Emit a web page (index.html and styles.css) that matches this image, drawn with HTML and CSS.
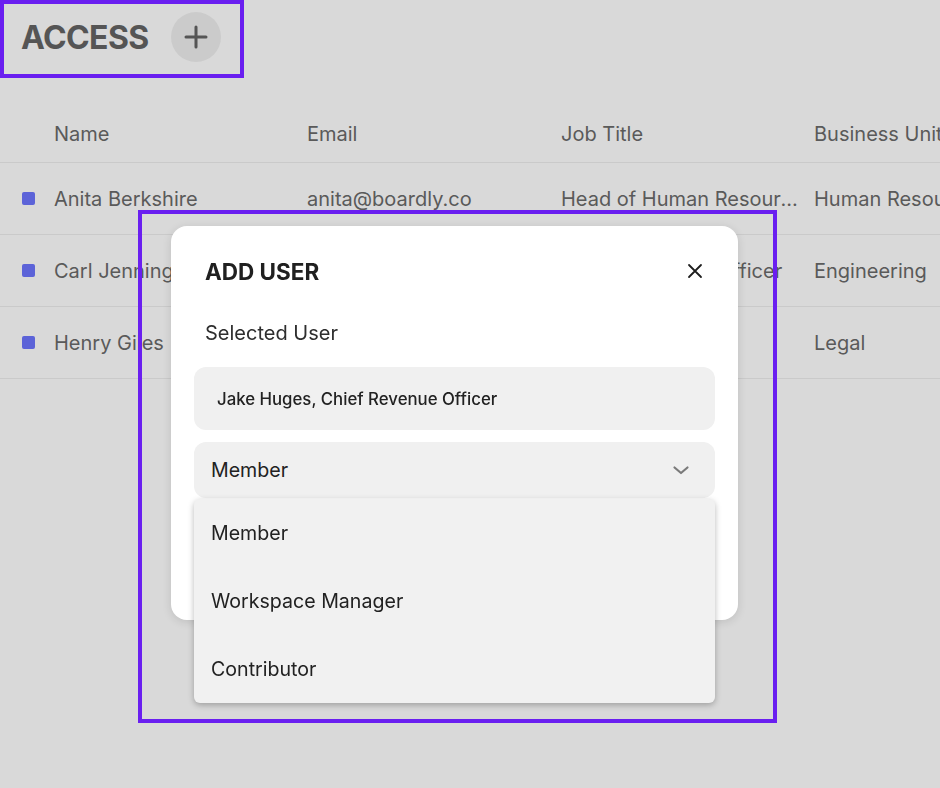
FILE: index.html
```html
<!DOCTYPE html>
<html lang="en">
<head>
<meta charset="utf-8">
<title>Access</title>
<link rel="stylesheet" href="styles.css">
</head>
<body>
<div class="page">
  <header class="page-header">
    <h1 class="page-title">ACCESS</h1>
    <button class="add-btn" aria-label="Add">
      <svg width="24" height="24" viewBox="0 0 24 24"><path d="M12 2v20M2 12h20" stroke="#555" stroke-width="3" stroke-linecap="round" fill="none"/></svg>
    </button>
  </header>

  <div class="table">
    <div class="row head">
      <div class="cell mark"></div>
      <div class="cell">Name</div>
      <div class="cell">Email</div>
      <div class="cell">Job Title</div>
      <div class="cell">Business Unit</div>
    </div>
    <div class="row">
      <div class="cell mark"><span class="sq"></span></div>
      <div class="cell">Anita Berkshire</div>
      <div class="cell">anita@boardly.co</div>
      <div class="cell">Head of Human Resources</div>
      <div class="cell">Human Resources</div>
    </div>
    <div class="row">
      <div class="cell mark"><span class="sq"></span></div>
      <div class="cell">Carl Jennings</div>
      <div class="cell">carl@boardly.co</div>
      <div class="cell right">Chief Marketing Officer</div>
      <div class="cell">Engineering</div>
    </div>
    <div class="row">
      <div class="cell mark"><span class="sq"></span></div>
      <div class="cell">Henry Giles</div>
      <div class="cell">henry@boardly.co</div>
      <div class="cell">General Counsel</div>
      <div class="cell">Legal</div>
    </div>
  </div>
</div>

<div class="modal">
  <div class="modal-head">
    <h2 class="modal-title">ADD USER</h2>
    <button class="close" aria-label="Close">
      <svg width="16" height="16" viewBox="0 0 16 16"><path d="M2 2l12 12M14 2L2 14" stroke="#1e1e1e" stroke-width="1.8" stroke-linecap="round" fill="none"/></svg>
    </button>
  </div>
  <div class="label">Selected User</div>
  <div class="field">Jake Huges, Chief Revenue Officer</div>
  <div class="select">
    <span>Member</span>
    <svg class="chev" width="18" height="12" viewBox="0 0 18 12"><path d="M2.5 3.5l6.5 5.5 6.5-5.5" stroke="#7a7a7a" stroke-width="2.2" stroke-linecap="round" stroke-linejoin="round" fill="none"/></svg>
    <ul class="menu">
      <li>Member</li>
      <li>Workspace Manager</li>
      <li>Contributor</li>
    </ul>
  </div>
</div>

<div class="annot annot-a"></div>
<div class="annot annot-b"></div>
</body>
</html>
```

FILE: styles.css
```css
* { box-sizing: border-box; }
html, body { margin: 0; padding: 0; }
body {
  background: #d9d9d9;
  font-family: Inter, "Noto Sans", sans-serif;
  color: #5a5a5a;
  width: 940px;
  height: 788px;
  overflow: hidden;
}
.page { width: 940px; }
.page-header {
  display: flex;
  align-items: center;
  gap: 22px;
  height: 74px;
  padding-left: 21px;
}
.page-title {
  margin: 0;
  font-size: 32px;
  font-weight: 700;
  color: #555555;
  letter-spacing: -0.6px;
}
.add-btn {
  width: 50px;
  height: 50px;
  border-radius: 50%;
  border: 0;
  background: #cbcbcb;
  display: flex;
  align-items: center;
  justify-content: center;
  padding: 0;
}
.table { margin-top: 32px; overflow: hidden; width: 940px; }
.row {
  display: grid;
  grid-template-columns: 54px 253px 254px 253px 254px;
  height: 72px;
  align-items: center;
  border-bottom: 1px solid #cacaca;
  font-size: 20px;
  white-space: nowrap;
}
.row.head { height: 57px; }
.cell {
  overflow: hidden;
  text-overflow: ellipsis;
  padding-right: 16px;
}
.cell.mark { padding-left: 22px; display: flex; align-items: center; }
.sq {
  width: 13px;
  height: 13px;
  border-radius: 2px;
  background: #5c63d8;
}
.modal {
  position: fixed;
  left: 171px;
  top: 226px;
  width: 567px;
  height: 394px;
  background: #ffffff;
  border-radius: 16px;
  box-shadow: 0 2px 10px rgba(0,0,0,0.12);
  padding: 23px 23px 0 23px;
  display: flex;
  flex-direction: column;
  color: #222;
}
.modal-head {
  display: flex;
  align-items: center;
  justify-content: space-between;
  height: 44px;
  padding-left: 11px;
  padding-right: 12px;
}
.modal-title {
  margin: 0;
  font-size: 22.5px;
  font-weight: 700;
  color: #202020;
  letter-spacing: 0;
}
.close {
  border: 0;
  background: none;
  padding: 0;
  width: 16px;
  height: 16px;
  display: flex;
}
.label {
  margin-top: 28px;
  padding-left: 11px;
  font-size: 20px;
  line-height: 24px;
  color: #2e2e2e;
}
.field {
  margin-top: 22px;
  height: 63px;
  background: #f0f0f0;
  border-radius: 12px;
  display: flex;
  align-items: center;
  padding-left: 23px;
  font-size: 16.8px;
  font-weight: 500;
  color: #222;
}
.select {
  position: relative;
  margin-top: 12px;
  height: 56px;
  background: #f0f0f0;
  border-radius: 12px;
  display: flex;
  align-items: center;
  justify-content: space-between;
  padding-left: 17px;
  padding-right: 25px;
  font-size: 19.6px;
  color: #222;
}
.chev { display: block; }
.menu {
  position: absolute;
  left: 0;
  right: 0;
  top: 57px;
  margin: 0;
  padding: 0;
  list-style: none;
  background: #f1f1f1;
  border-radius: 6px;
  box-shadow: 0 2px 6px rgba(0,0,0,0.28);
}
.menu li {
  height: 68px;
  display: flex;
  align-items: center;
  padding-left: 17px;
  font-size: 19.6px;
  color: #222;
}
.annot {
  position: fixed;
  border: 4px solid #6a1ff0;
  pointer-events: none;
}
.annot-a { left: 0; top: 0; width: 244px; height: 78px; }
.annot-b { left: 138px; top: 210px; width: 639px; height: 513px; }
```
